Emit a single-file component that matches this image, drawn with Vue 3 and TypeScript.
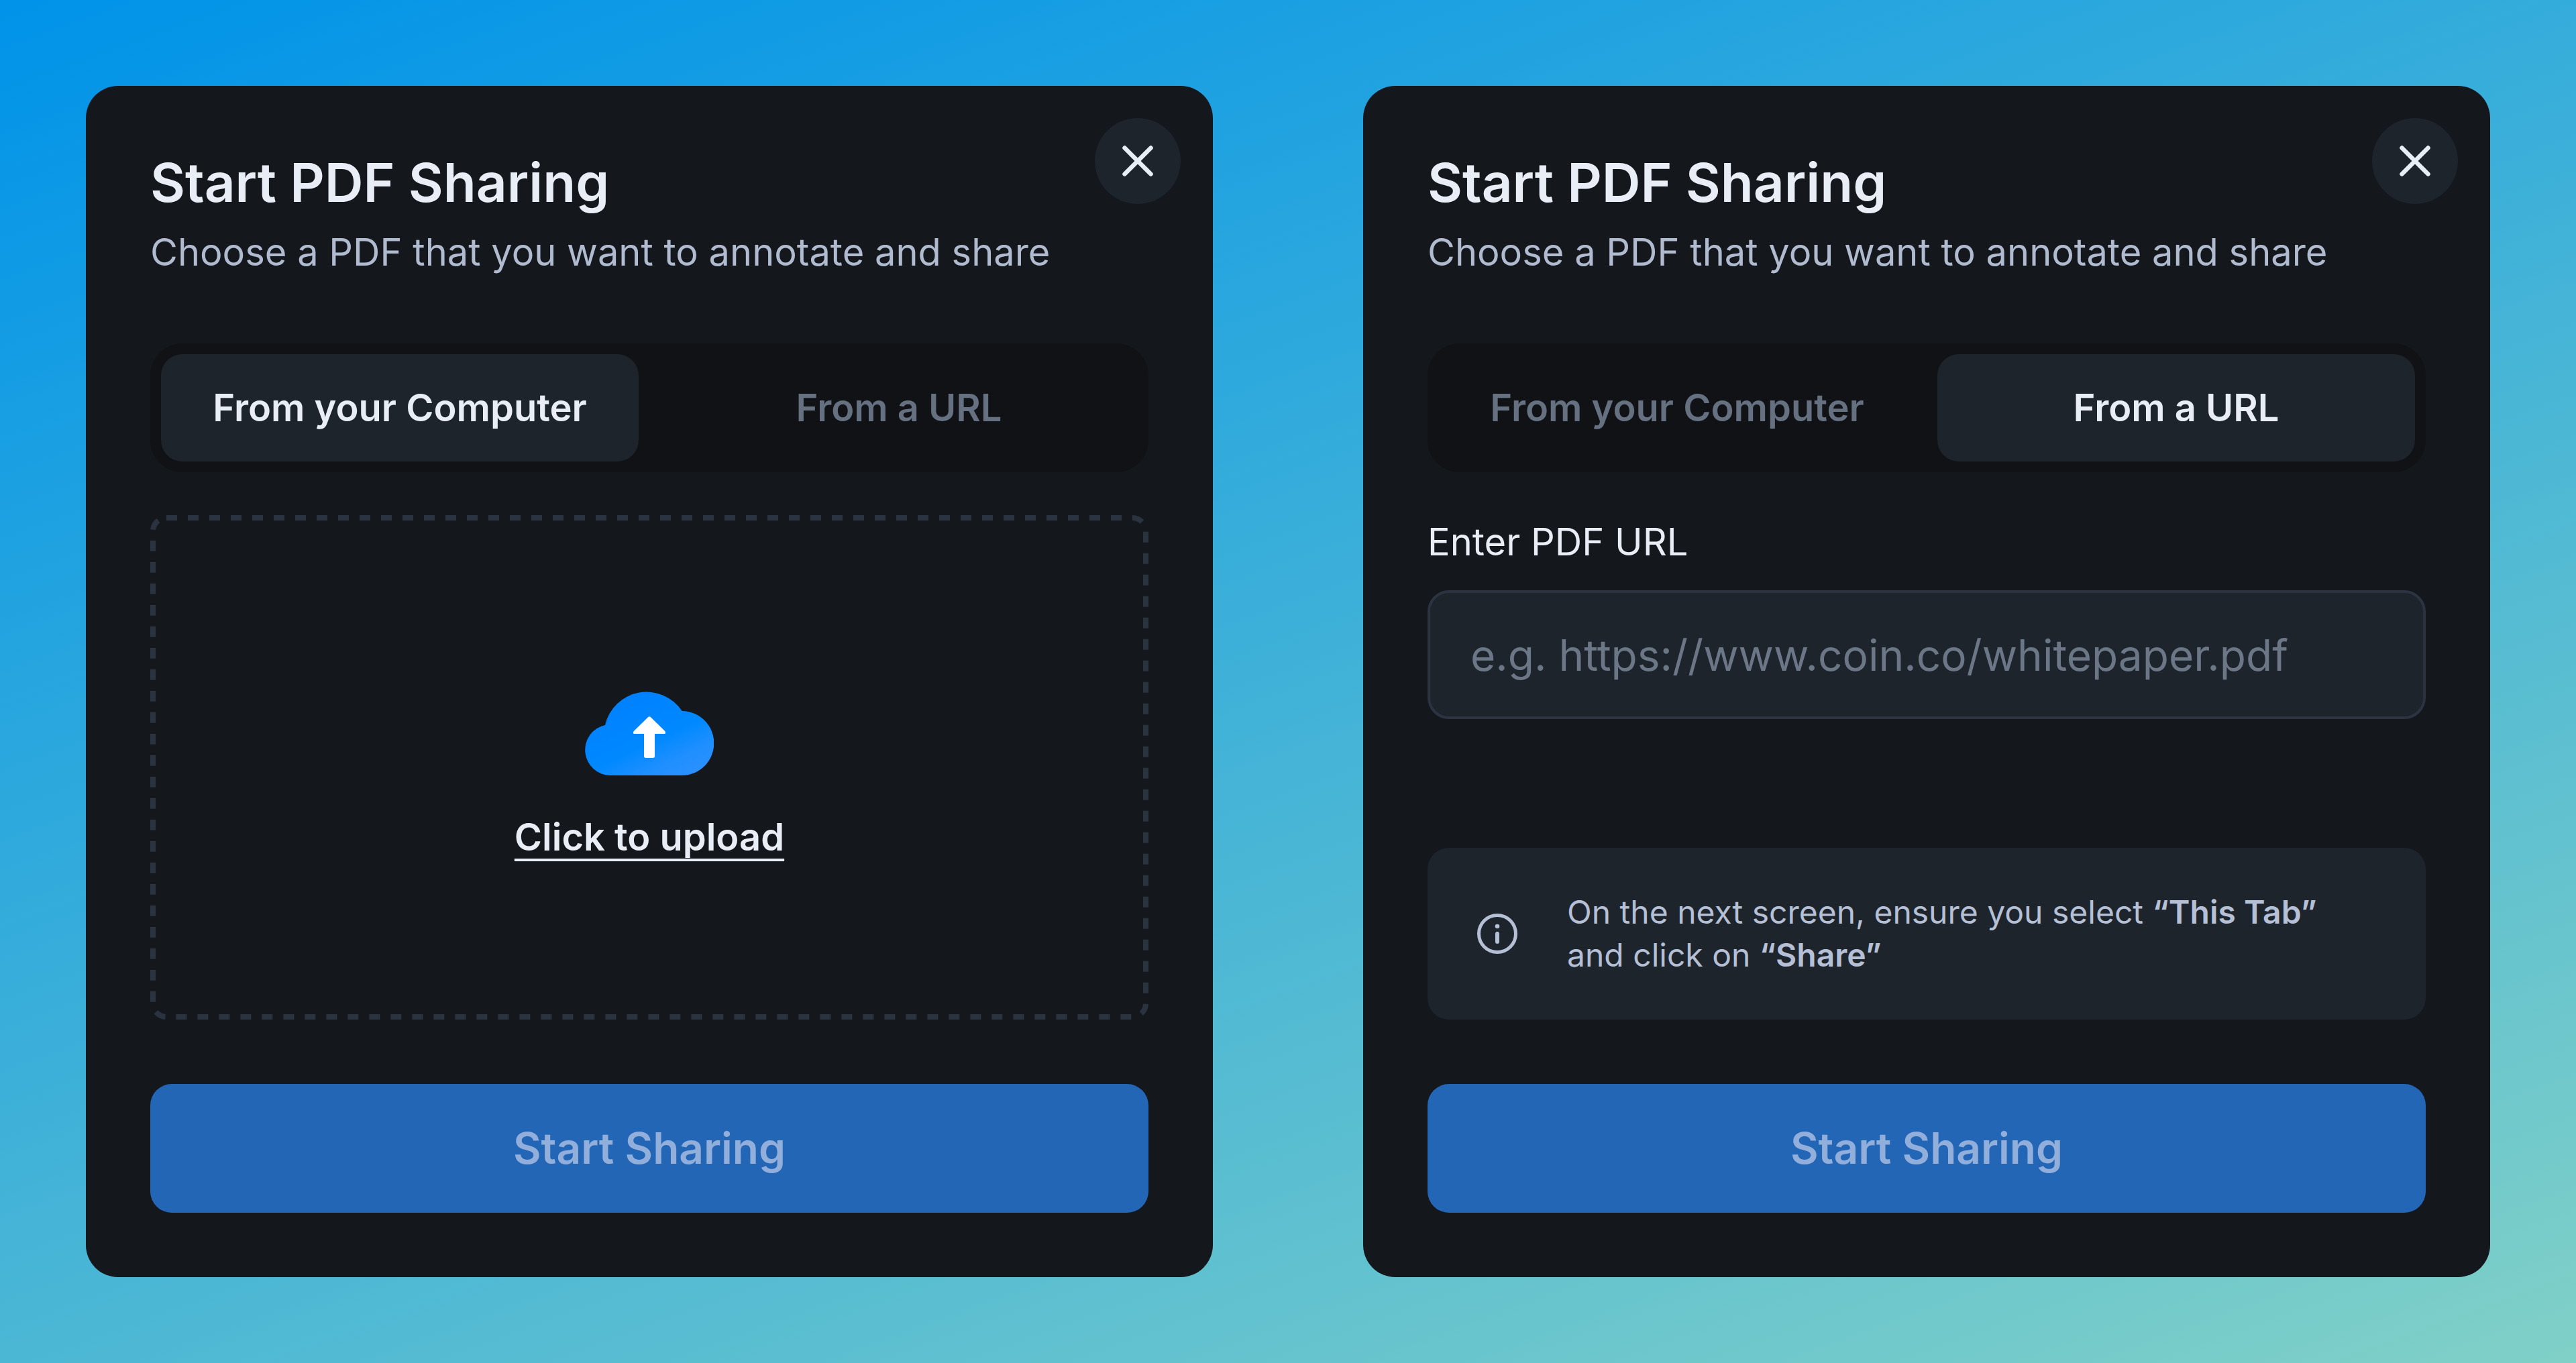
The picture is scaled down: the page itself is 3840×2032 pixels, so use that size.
<script setup lang="ts">
import { reactive } from 'vue'

type Source = 'computer' | 'url'

interface Dialog {
  id: string
  source: Source
  url: string
}

const tabs: { source: Source; label: string }[] = [
  { source: 'computer', label: 'From your Computer' },
  { source: 'url', label: 'From a URL' },
]

const dialogs = reactive<Dialog[]>([
  { id: 'upload', source: 'computer', url: '' },
  { id: 'link', source: 'url', url: '' },
])
</script>

<template>
  <main class="stage">
    <section
      v-for="dialog in dialogs"
      :key="dialog.id"
      class="dialog"
      role="dialog"
      :aria-labelledby="`${dialog.id}-title`"
    >
      <button class="close" type="button" aria-label="Close">
        <svg viewBox="0 0 80 80" aria-hidden="true">
          <path d="M20.5 20.5 59.5 59.5M59.5 20.5 20.5 59.5" />
        </svg>
      </button>

      <header class="heading">
        <h2 :id="`${dialog.id}-title`" class="title">Start PDF Sharing</h2>
        <p class="subtitle">Choose a PDF that you want to annotate and share</p>
      </header>

      <div class="tabs" role="tablist">
        <button
          v-for="tab in tabs"
          :key="tab.source"
          class="tab"
          :class="{ active: tab.source === dialog.source }"
          type="button"
          role="tab"
          :aria-selected="tab.source === dialog.source"
          @click="dialog.source = tab.source"
        >
          {{ tab.label }}
        </button>
      </div>

      <button v-if="dialog.source === 'computer'" class="dropzone" type="button">
        <svg class="outline" aria-hidden="true">
          <rect class="dashes" x="4" y="4" rx="20" />
        </svg>
        <svg class="cloud" viewBox="0 0 192 192" aria-hidden="true">
          <defs>
            <linearGradient :id="`${dialog.id}-sky`" x1="60" y1="32" x2="125" y2="170" gradientUnits="userSpaceOnUse">
              <stop offset="0" stop-color="#0080ff" />
              <stop offset="0.55" stop-color="#0089ff" />
              <stop offset="0.8" stop-color="#1f8fff" />
              <stop offset="1" stop-color="#2b90ff" />
            </linearGradient>
          </defs>
          <path
            :fill="`url(#${dialog.id}-sky)`"
            d="M38 156A38 38 0 0 1 30 80.9A63.4 63.4 0 0 1 144.7 60A48 48 0 0 1 144 156Z"
          />
          <path
            class="arrow"
            d="M94.2 69Q96 67.3 97.8 69L119.500 90.3Q121 94 118.500 94H104V127Q104 130 101 130H91Q88 130 88 127V94H73.5Q71 94 72.5 90.3Z"
          />
        </svg>
        <span class="upload">Click to upload</span>
      </button>

      <div v-else class="link-form">
        <label class="label" :for="`${dialog.id}-url`">Enter PDF URL</label>
        <input
          :id="`${dialog.id}-url`"
          v-model="dialog.url"
          class="field"
          type="url"
          placeholder="e.g. https://www.coin.co/whitepaper.pdf"
        />
        <aside class="note">
          <svg class="info" viewBox="0 0 80 80" aria-hidden="true">
            <circle class="ring" cx="40" cy="40" r="27.5" />
            <circle class="dot" cx="40" cy="29" r="3.3" />
            <path class="stem" d="M40 40V52" />
          </svg>
          <p class="note-text">
            On the next screen, ensure you select <b>“This Tab”</b><br />
            and click on <b>“Share”</b>
          </p>
        </aside>
      </div>

      <button class="submit" type="button" disabled>Start Sharing</button>
    </section>
  </main>
</template>

<style>
body {
  margin: 0;
}
</style>

<style scoped>
.stage {
  box-sizing: border-box;
  min-height: 100vh;
  padding: 128px;
  display: grid;
  grid-template-columns: repeat(auto-fit, minmax(1400px, 1fr));
  gap: 224px;
  align-items: stretch;
  background: linear-gradient(160deg, #0093e9 0%, #80d0c7 100%);
  font-family: Inter, 'Noto Sans', sans-serif;
  font-optical-sizing: none;
  color: #e9edf6;
}

button,
input {
  margin: 0;
  border: 0;
  font: inherit;
  font-optical-sizing: none;
  color: inherit;
}

.dialog {
  position: relative;
  box-sizing: border-box;
  padding: 96px;
  display: flex;
  flex-direction: column;
  border-radius: 48px;
  background: #14171b;
}

.close {
  position: absolute;
  top: 48px;
  right: 48px;
  width: 128px;
  height: 128px;
  padding: 24px;
  border-radius: 50%;
  background: #1e242b;
}

.close svg {
  display: block;
  fill: none;
  stroke: #e9edf6;
  stroke-width: 6.5;
  stroke-linecap: round;
}

.heading {
  display: flex;
  flex-direction: column;
  gap: 16px;
}

.title {
  margin: 0;
  font-size: 80px;
  font-weight: 600;
  line-height: 96px;
}

.subtitle {
  margin: 0;
  font-size: 56px;
  line-height: 80px;
  color: #b0bbd0;
}

.tabs {
  margin-top: 96px;
  padding: 16px;
  display: flex;
  gap: 32px;
  border-radius: 48px;
  background: #111216;
}

.tab {
  flex: 1 1 0;
  padding: 40px 0;
  border-radius: 32px;
  background: none;
  font-size: 56px;
  font-weight: 600;
  line-height: 80px;
  color: #657080;
}

.tab.active {
  background: #1e242b;
  color: #e9edf6;
}

.dropzone {
  position: relative;
  flex: 1;
  margin-top: 64px;
  padding: 232px 64px;
  display: flex;
  flex-direction: column;
  align-items: center;
  gap: 16px;
  background: none;
}

.outline {
  position: absolute;
  inset: 0;
  width: 100%;
  height: 100%;
}

.dashes {
  width: calc(100% - 8px);
  height: calc(100% - 8px);
  fill: none;
  stroke: #2a333f;
  stroke-width: 8;
  stroke-dasharray: 16 16;
}

.cloud {
  width: 192px;
  height: 192px;
}

.arrow {
  fill: #fff;
}

.upload {
  font-size: 56px;
  font-weight: 600;
  line-height: 80px;
  text-decoration: underline;
  text-decoration-thickness: 4px;
  text-decoration-skip-ink: none;
  text-underline-offset: 12px;
}

.link-form {
  flex: 1;
  margin-top: 64px;
  display: flex;
  flex-direction: column;
}

.label {
  font-size: 56px;
  line-height: 80px;
}

.field {
  box-sizing: border-box;
  width: 100%;
  height: 192px;
  margin-top: 32px;
  padding: 52px 60px;
  border: 4px solid #2d3441;
  border-radius: 32px;
  background: #1e242b;
  font-size: 64px;
  line-height: 80px;
}

.field::placeholder {
  color: #6b7686;
  opacity: 1;
}

.note {
  margin-top: auto;
  padding: 64px;
  display: flex;
  align-items: center;
  gap: 64px;
  border-radius: 32px;
  background: #1e242b;
  color: #b5c0d6;
}

.info {
  flex: none;
  width: 80px;
  height: 80px;
}

.ring {
  fill: none;
  stroke: currentColor;
  stroke-width: 5;
}

.dot {
  fill: currentColor;
}

.stem {
  stroke: currentColor;
  stroke-width: 6;
  stroke-linecap: round;
}

.note-text {
  margin: 0;
  font-size: 48px;
  line-height: 64px;
}

.note-text b {
  font-weight: 600;
}

.submit {
  margin-top: 96px;
  padding: 56px;
  border-radius: 32px;
  background: #2366b6;
  font-size: 64px;
  font-weight: 600;
  line-height: 80px;
  color: #92afdb;
}
</style>
